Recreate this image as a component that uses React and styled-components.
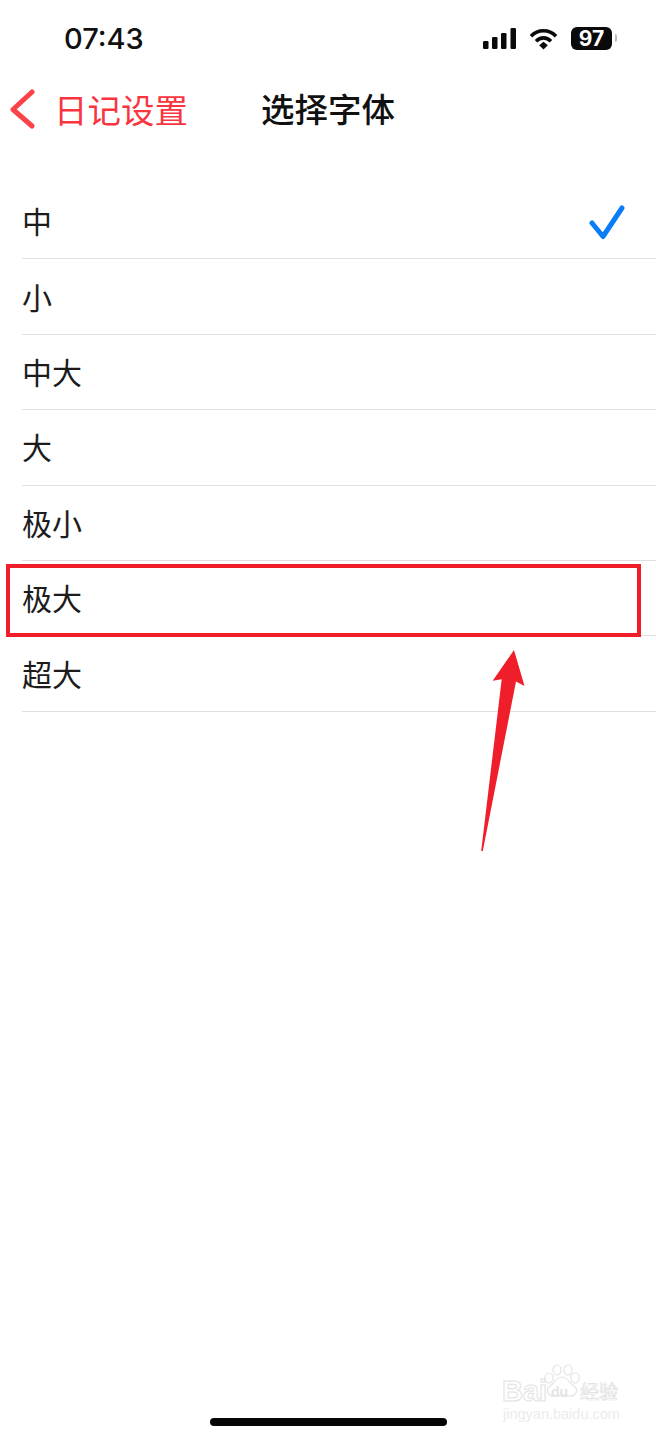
import styled, { createGlobalStyle } from "styled-components";

const GlobalStyle = createGlobalStyle`
  html, body {
    margin: 0;
    padding: 0;
    background: #fff;
  }
`;

const Page = styled.div`
  position: relative;
  display: flex;
  flex-direction: column;
  width: 656px;
  height: 1436px;
  overflow: hidden;
  background: #fff;
  font-family: "Noto Sans CJK SC", "Noto Sans", sans-serif;
`;

const StatusBar = styled.div`
  display: flex;
  align-items: center;
  justify-content: space-between;
  height: 77px;
  padding: 0 44px 0 64px;
  box-sizing: border-box;
`;

const Time = styled.span`
  font-family: Inter, "Liberation Sans", sans-serif;
  font-size: 29px;
  font-weight: 500;
  color: #111;
`;

const StatusIcons = styled.div`
  display: flex;
  align-items: center;
  gap: 13px;
`;

const Battery = styled.div`
  position: relative;
  display: flex;
  align-items: center;
  justify-content: center;
  width: 41px;
  height: 23px;
  border-radius: 6px;
  background: #0a0a0a;
  color: #fff;
  font-family: Inter, "Liberation Sans", sans-serif;
  font-size: 21px;
  font-weight: 700;
  &::after {
    content: "";
    position: absolute;
    right: -5px;
    top: 7px;
    width: 2px;
    height: 8px;
    border-radius: 0 2px 2px 0;
    background: #bbb;
  }
`;

const NavBar = styled.div`
  display: flex;
  align-items: center;
  height: 64px;
  padding-left: 10px;
`;

const BackLabel = styled.span`
  margin-left: 19px;
  margin-top: -2px;
  width: 207px;
  font-size: 33.5px;
  color: #f9353f;
  white-space: nowrap;
`;

const Title = styled.span`
  margin-top: -3px;
  font-size: 33.5px;
  font-weight: 500;
  color: #111;
  white-space: nowrap;
`;

const List = styled.div`
  margin-top: 43px;
  padding-left: 22px;
`;

const Row = styled.div`
  display: flex;
  align-items: center;
  justify-content: space-between;
  height: 75.4px;
  box-sizing: border-box;
  padding-right: 29px;
  border-bottom: 1px solid #e0e0e0;
  font-size: 30px;
  color: #1c1c1c;
`;

const RowLabel = styled.span`
  margin-top: -2px;
`;

const CheckIcon = styled.svg`
  margin-top: 4px;
`;

const Highlight = styled.div`
  position: absolute;
  left: 6px;
  top: 564px;
  width: 635px;
  height: 73px;
  box-sizing: border-box;
  border: 4px solid #f01e2a;
`;

const Arrow = styled.svg`
  position: absolute;
  left: 480px;
  top: 648px;
`;

const HomeBar = styled.div`
  align-self: center;
  width: 237px;
  height: 8px;
  margin-top: auto;
  margin-bottom: 10px;
  border-radius: 4px;
  background: #050505;
`;

const Watermark = styled.div`
  position: absolute;
  left: 502px;
  top: 1364px;
  width: 118px;
  height: 58px;
`;

const Paw = styled.svg`
  position: absolute;
  left: 40px;
  top: 0;
`;

const MarkLogo = styled.span`
  position: absolute;
  left: 0;
  top: 11px;
  font-family: "Liberation Sans", sans-serif;
  font-size: 29px;
  font-weight: 700;
  line-height: 32px;
  color: #fff;
  -webkit-text-stroke: 1px #e2e2e2;
`;

const MarkDu = styled.span`
  position: absolute;
  left: 49px;
  top: 19px;
  font-family: "Liberation Sans", sans-serif;
  font-size: 14px;
  font-weight: 700;
  line-height: 18px;
  color: #e4e4e4;
`;

const MarkCn = styled.span`
  position: absolute;
  left: 78px;
  top: 13px;
  font-size: 19px;
  line-height: 28px;
  color: #fff;
  white-space: nowrap;
  -webkit-text-stroke: 0.7px #dedede;
`;

const MarkUrl = styled.span`
  position: absolute;
  left: 1px;
  top: 42px;
  font-family: "Liberation Sans", sans-serif;
  font-size: 14.5px;
  line-height: 16px;
  color: #ececec;
  white-space: nowrap;
`;

const options = ["中", "小", "中大", "大", "极小", "极大", "超大"];

const SignalIcon = () => (
  <svg width="34" height="21" viewBox="0 0 34 21" fill="#0a0a0a">
    <rect x="1" y="13" width="5.5" height="8" rx="1.2" />
    <rect x="10" y="9" width="5.5" height="12" rx="1.2" />
    <rect x="19" y="5" width="5.5" height="16" rx="1.2" />
    <rect x="28.5" y="0" width="5.5" height="21" rx="1.2" />
  </svg>
);

const WifiIcon = () => (
  <svg width="29" height="22" viewBox="0 0 29 22" fill="none" stroke="#0a0a0a" strokeWidth="3.6">
    <path d="M2 8.2C9 1 20 1 27 8.2" />
    <path d="M7 13.2C11.5 8.8 17.5 8.8 22 13.2" />
    <path d="M10.2 17.2L14.5 13.8L18.8 17.2L14.5 21.4Z" fill="#0a0a0a" stroke="none" />
  </svg>
);

const BackChevron = () => (
  <svg width="25" height="40" viewBox="0 0 25 40" fill="none" stroke="#fa4248" strokeWidth="5" strokeLinecap="round" strokeLinejoin="round">
    <path d="M22 3L3 20.5L22 37" />
  </svg>
);

const App = () => {
  return (
    <Page>
      <GlobalStyle />
      <StatusBar>
        <Time>07:43</Time>
        <StatusIcons>
          <SignalIcon />
          <WifiIcon />
          <Battery>97</Battery>
        </StatusIcons>
      </StatusBar>
      <NavBar>
        <BackChevron />
        <BackLabel>日记设置</BackLabel>
        <Title>选择字体</Title>
      </NavBar>
      <List>
        {options.map((option, index) => (
          <Row key={option}>
            <RowLabel>{option}</RowLabel>
            {index === 0 && (
              <CheckIcon width="38" height="38" viewBox="0 0 38 38" fill="none" stroke="#0a7cf5" strokeWidth="5" strokeLinecap="round" strokeLinejoin="round">
                <path d="M3 19L14 32.5L33 4" />
              </CheckIcon>
            )}
          </Row>
        ))}
      </List>
      <Highlight />
      <Arrow width="48" height="206" viewBox="0 0 48 206">
        <path d="M34 2L44.5 38L36 33.5L2.8 203L1.2 203L21.7 31.3L12.7 32.7Z" fill="#f01e2a" />
      </Arrow>
      <Watermark>
        <Paw width="40" height="36" viewBox="0 0 40 36" fill="#fff" stroke="#e4e4e4" strokeWidth="1.2">
          <ellipse cx="7" cy="14" rx="4" ry="5" />
          <ellipse cx="15" cy="6" rx="4" ry="5" />
          <ellipse cx="26" cy="6" rx="4" ry="5" />
          <ellipse cx="33" cy="14" rx="4" ry="5" />
          <path d="M20 13C14 13 12 20 7 23C3 27 7 33 13 32C17 31 23 31 27 32C33 33 37 27 33 23C28 20 26 13 20 13Z" />
        </Paw>
        <MarkLogo>Bai</MarkLogo>
        <MarkDu>du</MarkDu>
        <MarkCn>经验</MarkCn>
        <MarkUrl>jingyan.baidu.com</MarkUrl>
      </Watermark>
      <HomeBar />
    </Page>
  );
};

export default App;
